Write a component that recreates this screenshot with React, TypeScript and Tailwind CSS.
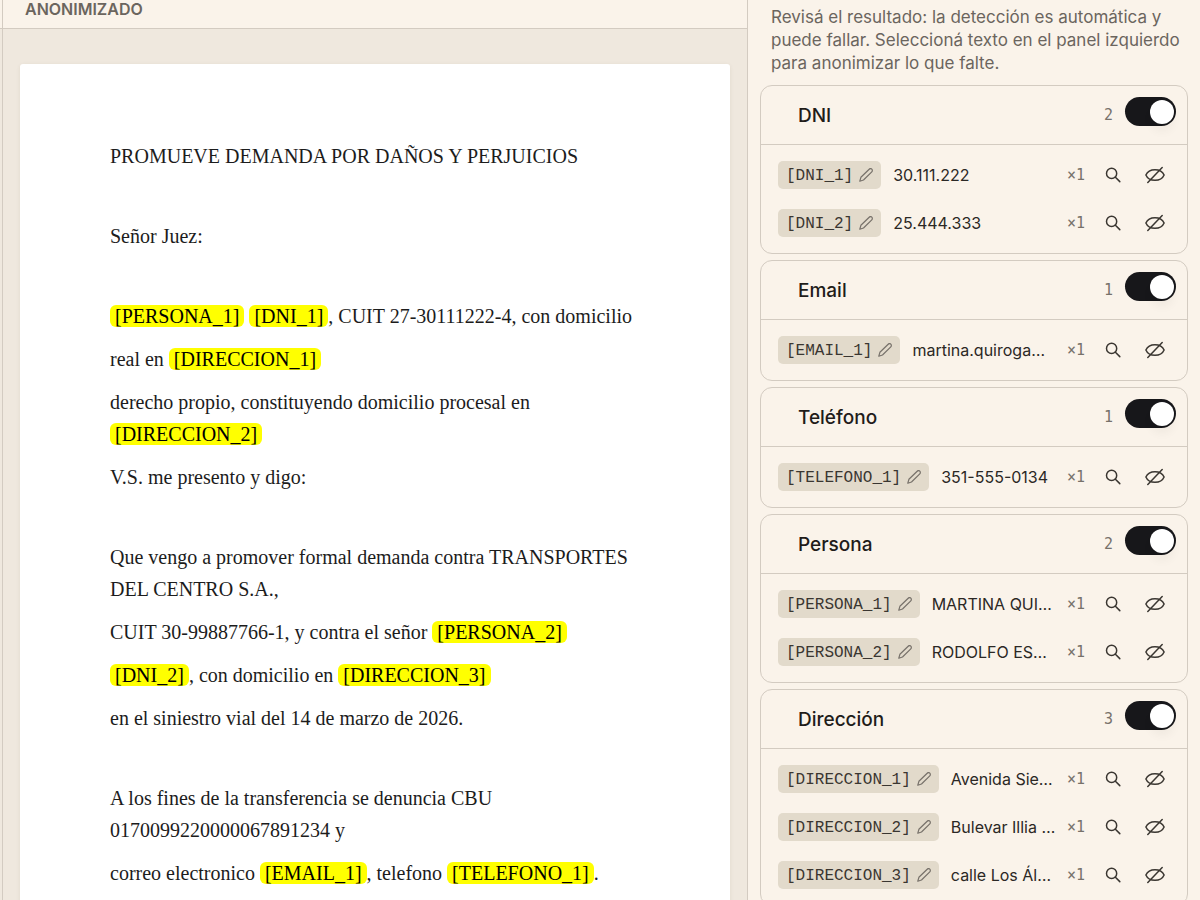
import type { ReactNode } from "react";

type Item = { token: string; value: string; count: number };
type Group = { name: string; items: Item[] };

const groups: Group[] = [
  {
    name: "DNI",
    items: [
      { token: "[DNI_1]", value: "30.111.222", count: 1 },
      { token: "[DNI_2]", value: "25.444.333", count: 1 },
    ],
  },
  { name: "Email", items: [{ token: "[EMAIL_1]", value: "martina.quiroga…", count: 1 }] },
  { name: "Teléfono", items: [{ token: "[TELEFONO_1]", value: "351-555-0134", count: 1 }] },
  {
    name: "Persona",
    items: [
      { token: "[PERSONA_1]", value: "MARTINA QUI…", count: 1 },
      { token: "[PERSONA_2]", value: "RODOLFO ES…", count: 1 },
    ],
  },
  {
    name: "Dirección",
    items: [
      { token: "[DIRECCION_1]", value: "Avenida Sie…", count: 1 },
      { token: "[DIRECCION_2]", value: "Bulevar Illia …", count: 1 },
      { token: "[DIRECCION_3]", value: "calle Los Ál…", count: 1 },
    ],
  },
];

const PencilIcon = () => (
  <svg width="14" height="14" viewBox="0 0 14 14" fill="none" stroke="currentColor" strokeWidth="1.2" strokeLinejoin="round" aria-hidden="true">
    <path d="M.8 13.2 1.900 9.300 10.200 1.200a1.800 1.800 0 0 1 2.600 2.600l-8.300 8.200z" />
  </svg>
);

const SearchIcon = () => (
  <svg width="16" height="16" viewBox="0 0 16 16" fill="none" stroke="currentColor" strokeWidth="1.5" strokeLinecap="round" aria-hidden="true">
    <circle cx="6.6" cy="6.4" r="5.1" />
    <path d="m10.4 10.2 4.4 4.400" />
  </svg>
);

const HideIcon = () => (
  <svg width="20" height="18" viewBox="0 0 20 18" fill="none" stroke="currentColor" strokeWidth="1.5" strokeLinecap="round" strokeLinejoin="round" aria-hidden="true">
    <path d="M.9 9C2.500 5.300 6 3.700 10 3.700S17.500 5.300 19.100 9C17.500 12.700 14 14.300 10 14.300S2.500 12.700.9 9z" />
    <path d="M17.200 1.500 2.800 16.500" />
  </svg>
);

const Mark = ({ children }: { children: ReactNode }) => (
  <mark className="rounded-md bg-[#ffff00] px-[5px] text-black">{children}</mark>
);

const ItemRow = ({ item }: { item: Item }) => (
  <li className="flex h-12 items-center pr-3 pl-[17px]">
    <button type="button" className="flex h-7 shrink-0 items-center gap-[6px] rounded-[5px] bg-[#e2dacb] px-2 font-['Liberation_Mono',monospace] text-base text-[#3a3631]">
      <span className="pt-[2px]">{item.token}</span>
      <span className="text-[#77716a]"><PencilIcon /></span>
    </button>
    <span className="ml-3 min-w-0 flex-1 whitespace-nowrap text-base text-[#2b2825]">{item.value}</span>
    <span className="font-['DejaVu_Sans_Mono',monospace] text-[15px] text-[#77716a]">×{item.count}</span>
    <button type="button" aria-label={`Buscar ${item.token}`} className="ml-2 flex size-10 items-center justify-center text-[#3a3631]">
      <SearchIcon />
    </button>
    <button type="button" aria-label={`Ocultar ${item.token}`} className="ml-[2px] flex size-10 items-center justify-center text-[#3a3631]">
      <HideIcon />
    </button>
  </li>
);

const GroupCard = ({ group }: { group: Group }) => (
  <section className="rounded-xl border border-[#d3cbc1]">
    <div className="flex h-[59px] items-center border-b border-[#d3cbc1] pr-[11px] pl-[37px]">
      <h3 className="flex-1 pt-[3px] text-[19px] font-medium text-[#1f1c19]">{group.name}</h3>
      <span className="mr-3 font-['DejaVu_Sans_Mono',monospace] text-[15px] text-[#77716a]">{group.items.length}</span>
      <label className="mb-[7px] flex h-[29px] w-[51px] cursor-pointer items-center justify-end rounded-full bg-[#17171a] p-[2px] has-[:focus-visible]:ring-2">
        <input type="checkbox" defaultChecked className="sr-only" aria-label={`Anonimizar ${group.name}`} />
        <span className="size-6 rounded-full bg-white shadow-[0_8px_10px_rgba(0,0,0,0.04)]" />
      </label>
    </div>
    <ul className="py-[6px]">
      {group.items.map((item) => (
        <ItemRow key={item.token} item={item} />
      ))}
    </ul>
  </section>
);

const Blank = () => <div className="h-[26px]" />;

const Sheet = () => (
  <article className="mx-[17px] mt-[35px] flex flex-col gap-[11px] rounded-[3px] bg-white px-[90px] pt-[76px] pb-24 font-['Liberation_Serif',serif] text-xl leading-8 text-[#1c1c1c] shadow-[0_1px_4px_rgba(80,60,30,0.08)]">
    <p>PROMUEVE DEMANDA POR DAÑOS Y PERJUICIOS</p>
    <Blank />
    <p>Señor Juez:</p>
    <Blank />
    <p><Mark>[PERSONA_1]</Mark> <Mark>[DNI_1]</Mark>, CUIT 27-30111222-4, con domicilio</p>
    <p>real en <Mark>[DIRECCION_1]</Mark></p>
    <p>derecho propio, constituyendo domicilio procesal en <Mark>[DIRECCION_2]</Mark></p>
    <p>V.S. me presento y digo:</p>
    <Blank />
    <p>Que vengo a promover formal demanda contra TRANSPORTES DEL CENTRO S.A.,</p>
    <p>CUIT 30-99887766-1, y contra el señor <Mark>[PERSONA_2]</Mark></p>
    <p><Mark>[DNI_2]</Mark>, con domicilio en <Mark>[DIRECCION_3]</Mark></p>
    <p>en el siniestro vial del 14 de marzo de 2026.</p>
    <Blank />
    <p>A los fines de la transferencia se denuncia CBU 0170099220000067891234 y</p>
    <p>correo electronico <Mark>[EMAIL_1]</Mark>, telefono <Mark>[TELEFONO_1]</Mark>.</p>
  </article>
);

const App = () => (
  <div className="flex h-screen overflow-hidden bg-[#faf3ea] font-[Inter,sans-serif]">
    {/* edge of the original document pane */}
    <div className="w-[2px] shrink-0 bg-[#efe8de]">
      <div className="h-[29px] border-b border-[#d3cbc1] bg-[#faf3ea]" />
    </div>
    <main className="min-w-0 flex-1 border-x border-[#d3cbc1] bg-[#efe8de]">
      <header className="h-[29px] border-b border-[#d3cbc1] bg-[#faf3ea] pl-[22px]">
        <h2 className="text-base leading-[18px] font-semibold text-[#6b655e]">ANONIMIZADO</h2>
      </header>
      <Sheet />
    </main>
    <aside className="w-[452px] shrink-0 px-3 pt-[6px]">
      <p className="pl-[11px] text-[17px] leading-[23px] text-[#6b655e]">
        Revisá el resultado: la detección es automática y puede fallar. Seleccioná texto en el panel izquierdo para anonimizar lo que falte.
      </p>
      <div className="mt-[10px] flex flex-col gap-[6px]">
        {groups.map((group) => (
          <GroupCard key={group.name} group={group} />
        ))}
      </div>
    </aside>
  </div>
);

export default App;
